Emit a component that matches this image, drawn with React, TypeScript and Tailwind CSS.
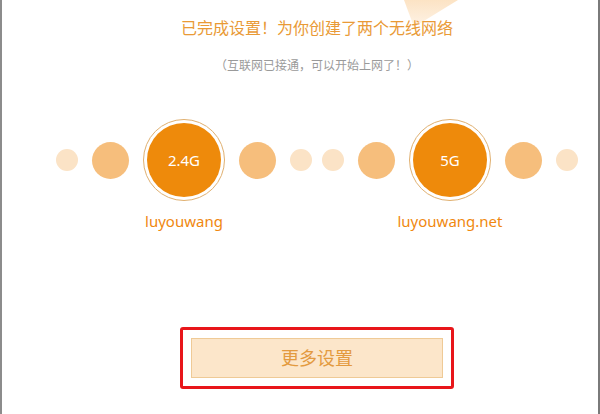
import React from "react";

const font = { fontFamily: '"Noto Sans", "Noto Sans CJK SC", sans-serif' };

function Group({ label, band }: { label: string; band: string }) {
  return (
    <div className="flex flex-col items-center">
      <div className="flex items-center gap-[14px]">
        <div className="w-[22px] h-[22px] rounded-full bg-[#FBE3C6]" />
        <div className="w-[37px] h-[37px] rounded-full bg-[#F6BE7C]" />
        <div className="w-[82px] h-[82px] rounded-full border border-[#E0B070] p-[3px] bg-white">
          <div className="w-full h-full rounded-full bg-[#EE8A0B] flex items-center justify-center text-white text-[15px] leading-none">
            {band}
          </div>
        </div>
        <div className="w-[37px] h-[37px] rounded-full bg-[#F6BE7C]" />
        <div className="w-[22px] h-[22px] rounded-full bg-[#FBE3C6]" />
      </div>
      <div className="mt-[10px] text-[15px] leading-[20px] text-[#F0880F]">{label}</div>
    </div>
  );
}

export default function App() {
  return (
    <div
      className="relative w-[600px] h-[414px] bg-white border-l-2 border-r-2 border-l-[#8c8c8c] border-r-[#7a7a7a] overflow-hidden"
      style={font}
    >
      <svg className="absolute left-[398px] top-0" width="64" height="32" viewBox="0 0 64 32">
        <defs>
          <linearGradient id="pg" x1="0" y1="0" x2="0" y2="1">
            <stop offset="0" stopColor="#FCE3C4" />
            <stop offset="1" stopColor="#FEF3E6" />
          </linearGradient>
        </defs>
        <polygon points="4,0 58,0 14,27" fill="url(#pg)" />
      </svg>
      <div className="relative flex flex-col items-center pl-[34px]">
        <div className="mt-[18px] text-[16px] leading-[20px] text-[#E99A36]">
          已完成设置！为你创建了两个无线网络
        </div>
        <div className="mt-[20px] text-[12px] leading-[16px] text-[#9a9a9a]">
          （互联网已接通，可以开始上网了！）
        </div>
        <div className="mt-[45px] flex gap-[10px]">
          <Group label="luyouwang" band="2.4G" />
          <Group label="luyouwang.net" band="5G" />
        </div>
        <div className="mt-[96px] rounded-[3px] border-[3px] border-[#E8161A] px-[8px] py-[8px]">
          <div className="w-[252px] h-[40px] bg-[#FCE6CA] border border-[#EFCA96] flex items-center justify-center text-[18px] text-[#E39A3F]">
            更多设置
          </div>
        </div>
      </div>
    </div>
  );
}
